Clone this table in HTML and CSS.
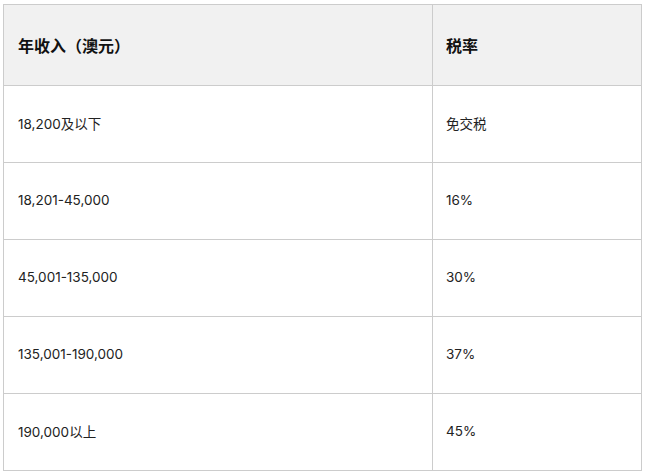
FILE: index.html
```html
<!DOCTYPE html>
<html lang="zh">
<head>
<meta charset="utf-8">
<link rel="stylesheet" href="styles.css">
</head>
<body>
<table class="tax">
  <thead>
    <tr><th class="c1">年收入（澳元）</th><th class="c2">税率</th></tr>
  </thead>
  <tbody>
    <tr><td>18,200及以下</td><td class="c2">免交税</td></tr>
    <tr><td>18,201-45,000</td><td class="c2">16%</td></tr>
    <tr><td>45,001-135,000</td><td class="c2">30%</td></tr>
    <tr><td>135,001-190,000</td><td class="c2">37%</td></tr>
    <tr><td>190,000以上</td><td class="c2">45%</td></tr>
  </tbody>
</table>
</body>
</html>
```

FILE: styles.css
```css
html, body { background: #fff; }
body {
  margin: 4px 0 0 3px;
  font-family: "Inter", "Noto Sans CJK SC", sans-serif;
  color: #222;
}
.tax {
  width: 639px;
  border-collapse: collapse;
  table-layout: fixed;
}
.tax th, .tax td {
  border: 1px solid #cccccc;
  text-align: left;
  padding: 0 13px 0 14px;
  vertical-align: middle;
}
.tax th {
  background: #f1f1f1;
  height: 80px;
  font-size: 16px;
  font-weight: 700;
  color: #111;
}
.tax td {
  height: 77px;
  padding-bottom: 3px;
  box-sizing: border-box;
  font-size: 13.5px;
  font-weight: 400;
}
.tax .c1 { width: 401px; }
.tax .c2 { padding-left: 13px; }
```
